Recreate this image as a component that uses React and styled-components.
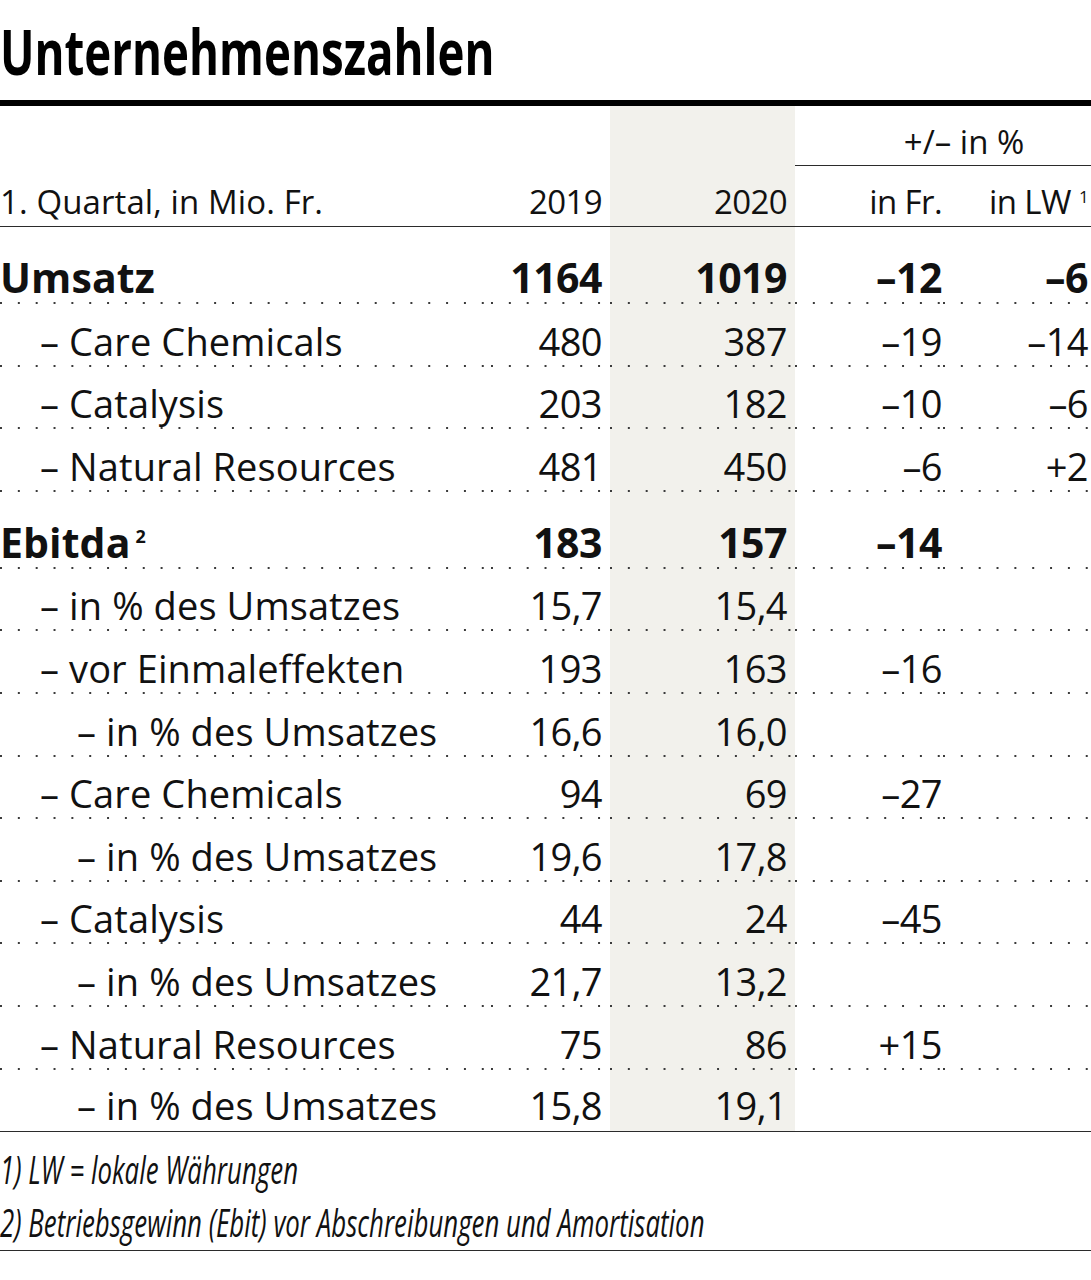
import React from "react";
import styled, { createGlobalStyle } from "styled-components";

const FONT = '"Open Sans", "Noto Sans", "Liberation Sans", sans-serif';
const COLS = "491px 119px 185px 148px 148px";
const SHADE = "#f2f1ec";
const INK = "#111";
const DOTS = "linear-gradient(to right, #3a3a3a 0 2px, transparent 2px)";

const GlobalStyle = createGlobalStyle`
  html, body { margin: 0; padding: 0; background: #fff; }
  body { font-family: ${FONT}; color: ${INK}; }
`;

const Page = styled.div`
  width: 1091px;
  height: 1280px;
  background: #fff;
  overflow: hidden;
`;

const Title = styled.h1`
  margin: 0;
  height: 100px;
  box-sizing: border-box;
  padding-top: 19px;
  font-family: ${FONT};
  font-weight: 700;
  font-size: 63px;
  line-height: 1;
  color: #000;
  white-space: nowrap;
`;

// condensed face is not available, squeeze the wide one
const Squeeze = styled.span`
  display: inline-block;
  transform: scaleX(${p => p.$x});
  transform-origin: left center;
`;

const Rule = styled.div`
  height: 6px;
  background: #000;
`;

const Row = styled.div`
  display: grid;
  grid-template-columns: ${COLS};
  height: ${p => p.$h}px;
`;

const Cell = styled.div`
  display: flex;
  align-items: flex-end;
  justify-content: ${p => (p.$label ? "flex-start" : "flex-end")};
  box-sizing: border-box;
  min-width: 0;
  padding: 0 ${p => p.$pr || 0}px ${p => p.$pb || 0}px ${p => p.$pl || 0}px;
  background-color: ${p => (p.$shade ? SHADE : "transparent")};
  background-image: ${p => (p.$dots ? DOTS : "none")};
  background-size: 17.85px 2px;
  background-repeat: repeat-x;
  background-position: 0 100%;
  border-bottom: ${p => (p.$solid ? "1px solid #2b2b2b" : "0")};
  font-size: ${p => (p.$bold ? 41 : p.$head ? 33 : 38)}px;
  font-weight: ${p => (p.$bold ? 700 : 400)};
  letter-spacing: ${p => (p.$label ? 0.1 : p.$bold ? -0.5 : -0.6)}px;
  line-height: 1;
  white-space: nowrap;
`;

const GroupHead = styled.div`
  grid-column: 4 / span 2;
  display: flex;
  align-items: flex-end;
  justify-content: center;
  box-sizing: border-box;
  padding: 0 0 7px 42px;
  border-bottom: 1px solid #2b2b2b;
  font-size: 33px;
  line-height: 1;
  white-space: nowrap;
`;

const Sup = styled.span`
  font-size: ${p => (p.$bold ? 18 : 17)}px;
  font-weight: ${p => (p.$bold ? 700 : 400)};
  vertical-align: ${p => (p.$bold ? 15 : 11)}px;
  margin-left: ${p => (p.$bold ? 5 : 8)}px;
`;

const Notes = styled.div`
  box-sizing: border-box;
  padding: 11px 0 1px;
  border-bottom: 1px solid #2b2b2b;
`;

const Note = styled.div`
  font-style: italic;
  font-size: 38px;
  line-height: 53px;
  white-space: nowrap;
`;

const PAD_R = [0, 8, 8, 1, 3];
const INDENT = [0, 40, 77];

const rows = [
  { label: "Umsatz", bold: true, v: ["1164", "1019", "–12", "–6"] },
  { label: "– Care Chemicals", lvl: 1, v: ["480", "387", "–19", "–14"] },
  { label: "– Catalysis", lvl: 1, v: ["203", "182", "–10", "–6"] },
  { label: "– Natural Resources", lvl: 1, v: ["481", "450", "–6", "+2"] },
  { label: "Ebitda", sup: "2", bold: true, v: ["183", "157", "–14", ""] },
  { label: "– in % des Umsatzes", lvl: 1, v: ["15,7", "15,4", "", ""] },
  { label: "– vor Einmaleffekten", lvl: 1, v: ["193", "163", "–16", ""] },
  { label: "– in % des Umsatzes", lvl: 2, v: ["16,6", "16,0", "", ""] },
  { label: "– Care Chemicals", lvl: 1, v: ["94", "69", "–27", ""] },
  { label: "– in % des Umsatzes", lvl: 2, v: ["19,6", "17,8", "", ""] },
  { label: "– Catalysis", lvl: 1, v: ["44", "24", "–45", ""] },
  { label: "– in % des Umsatzes", lvl: 2, v: ["21,7", "13,2", "", ""] },
  { label: "– Natural Resources", lvl: 1, v: ["75", "86", "+15", ""] },
  { label: "– in % des Umsatzes", lvl: 2, v: ["15,8", "19,1", "", ""] },
];

function DataRow({ r, last }) {
  const h = r.bold ? 77 : 62.6;
  const pb = r.bold ? 6 : 7;
  const line = last ? { $solid: true } : { $dots: true };
  return (
    <Row $h={h}>
      <Cell $label $bold={r.bold} $pl={INDENT[r.lvl || 0]} $pb={pb} {...line}>
        <span>
          {r.label}
          {r.sup && <Sup $bold>{r.sup}</Sup>}
        </span>
      </Cell>
      {r.v.map((val, i) => (
        <Cell
          key={i}
          $bold={r.bold}
          $shade={i === 1}
          $pr={PAD_R[i + 1]}
          $pb={pb}
          {...line}
        >
          {val}
        </Cell>
      ))}
    </Row>
  );
}

export default function App() {
  return (
    <Page>
      <GlobalStyle />
      <Title>
        <Squeeze $x={0.725}>Unternehmenszahlen</Squeeze>
      </Title>
      <Rule />
      <Row $h={60}>
        <Cell />
        <Cell />
        <Cell $shade />
        <GroupHead>+/– in %</GroupHead>
      </Row>
      <Row $h={61}>
        <Cell $label $head $pb={8} $solid>1. Quartal, in Mio. Fr.</Cell>
        <Cell $head $pr={PAD_R[1]} $pb={8} $solid>2019</Cell>
        <Cell $head $shade $pr={PAD_R[2]} $pb={8} $solid>2020</Cell>
        <Cell $head $pr={PAD_R[3]} $pb={8} $solid>in Fr.</Cell>
        <Cell $head $pr={PAD_R[4]} $pb={8} $solid>
          <span>
            in LW<Sup>1</Sup>
          </span>
        </Cell>
      </Row>
      {rows.map((r, i) => (
        <DataRow key={i} r={r} last={i === rows.length - 1} />
      ))}
      <Notes>
        <Note>
          <Squeeze $x={0.68}>1) LW = lokale Währungen</Squeeze>
        </Note>
        <Note>
          <Squeeze $x={0.68}>2) Betriebsgewinn (Ebit) vor Abschreibungen und Amortisation</Squeeze>
        </Note>
      </Notes>
    </Page>
  );
}
